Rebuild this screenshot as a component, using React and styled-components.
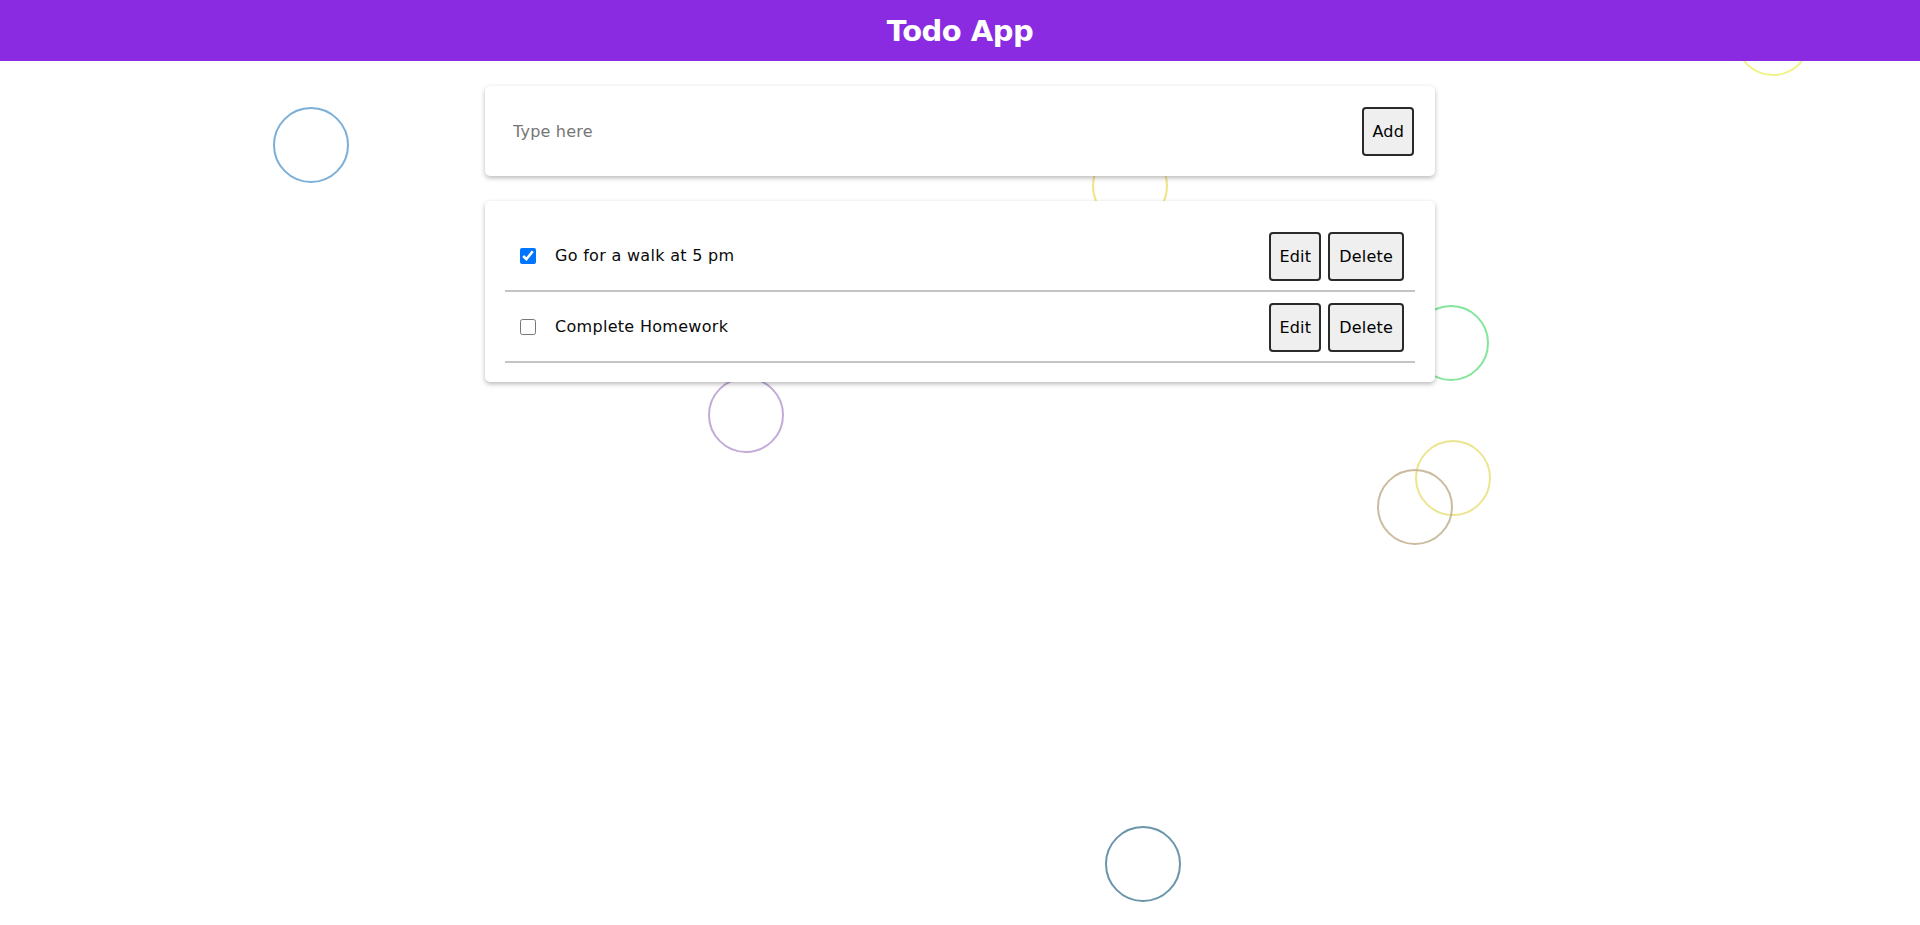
import React, { useState } from 'react'
import styled, { createGlobalStyle } from 'styled-components'

const GlobalStyle = createGlobalStyle`
  html, body {
    margin: 0;
    padding: 0;
    background: #ffffff;
    font-family: "DejaVu Sans", "Open Sans", sans-serif;
  }
  * { box-sizing: border-box; }
`

const Page = styled.div`
  position: relative;
  min-height: 925px;
  overflow: hidden;
`

const Header = styled.header`
  position: relative;
  z-index: 2;
  height: 61px;
  background: #8a2be2;
  display: flex;
  align-items: center;
  justify-content: center;
`

const Title = styled.h1`
  margin: 0;
  color: #ffffff;
  font-size: 29px;
  font-weight: 700;
  letter-spacing: -0.5px;
`

const Bubble = styled.span`
  position: absolute;
  z-index: 0;
  width: 76px;
  height: 76px;
  border-radius: 50%;
  border: 2px solid ${p => p.color};
  left: ${p => p.x - 38}px;
  top: ${p => p.y - 38}px;
`

const Main = styled.main`
  position: relative;
  z-index: 1;
  display: flex;
  flex-direction: column;
  align-items: center;
  gap: 25px;
  padding-top: 25px;
`

const Card = styled.div`
  width: 950px;
  background: #ffffff;
  border-radius: 5px;
  box-shadow: 0 2px 5px rgba(0, 0, 0, 0.28);
`

const InputCard = styled(Card)`
  display: flex;
  align-items: center;
  height: 90px;
  padding: 0 21px 0 26px;
`

const Input = styled.input`
  flex: 1;
  border: none;
  outline: none;
  font-family: inherit;
  font-size: 16px;
  letter-spacing: 0.2px;
  color: #222;
  background: transparent;
  &::placeholder { color: #767676; }
`

const Button = styled.button`
  height: 49px;
  padding: 0 ${p => p.wide ? 9 : 8}px;
  background: #efefef;
  border: 2px solid #2a2a2a;
  border-radius: 4px;
  font-family: inherit;
  font-size: 16px;
  letter-spacing: 0.2px;
  color: #000;
  cursor: pointer;
`

const ListCard = styled(Card)`
  padding: 20px 20px 19px;
`

const Row = styled.div`
  display: flex;
  align-items: center;
  height: 71px;
  padding: 0 11px 0 15px;
  border-bottom: 2px solid #c4c4c4;
`

const Check = styled.input`
  width: 16px;
  height: 16px;
  margin: 0 19px 0 0;
  accent-color: #0075ff;
`

const Text = styled.span`
  flex: 1;
  font-size: 16px;
  letter-spacing: 0.3px;
  color: #0a0a0a;
`

const Actions = styled.div`
  display: flex;
  gap: 7px;
  margin-top: 1px;
`

const bubbles = [
  { x: 311, y: 145, color: 'rgba(90, 155, 205, 0.8)' },
  { x: 1773, y: 38, color: 'rgba(238, 240, 110, 0.85)' },
  { x: 1130, y: 186, color: 'rgba(240, 225, 120, 0.9)' },
  { x: 1451, y: 343, color: 'rgba(110, 225, 140, 0.85)' },
  { x: 746, y: 415, color: 'rgba(180, 150, 205, 0.8)' },
  { x: 1453, y: 478, color: 'rgba(232, 225, 125, 0.85)' },
  { x: 1415, y: 507, color: 'rgba(190, 170, 135, 0.8)' },
  { x: 1143, y: 864, color: 'rgba(80, 130, 155, 0.85)' },
]

export default function App() {
  const [todos, setTodos] = useState([
    { id: 1, text: 'Go for a walk at 5 pm', done: true },
    { id: 2, text: 'Complete Homework', done: false },
  ])

  const toggle = id =>
    setTodos(todos.map(t => (t.id === id ? { ...t, done: !t.done } : t)))

  return (
    <Page>
      <GlobalStyle />
      <Header>
        <Title>Todo App</Title>
      </Header>
      {bubbles.map((b, i) => (
        <Bubble key={i} x={b.x} y={b.y} color={b.color} />
      ))}
      <Main>
        <InputCard>
          <Input placeholder="Type here" />
          <Button>Add</Button>
        </InputCard>
        <ListCard>
          {todos.map(t => (
            <Row key={t.id}>
              <Check type="checkbox" checked={t.done} onChange={() => toggle(t.id)} />
              <Text>{t.text}</Text>
              <Actions>
                <Button>Edit</Button>
                <Button wide>Delete</Button>
              </Actions>
            </Row>
          ))}
        </ListCard>
      </Main>
    </Page>
  )
}
